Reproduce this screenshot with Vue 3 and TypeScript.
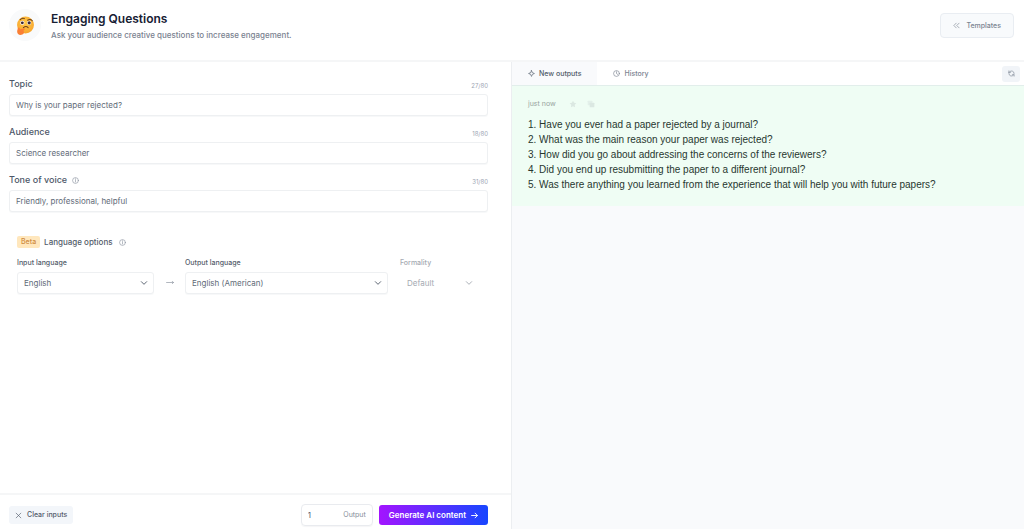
<script setup lang="ts">
import { reactive, ref } from 'vue'

interface Field {
  id: string
  label: string
  value: string
  count: string
  info: boolean
}

const fields = reactive<Field[]>([
  { id: 'topic', label: 'Topic', value: 'Why is your paper rejected?', count: '27/80', info: false },
  { id: 'audience', label: 'Audience', value: 'Science researcher', count: '18/80', info: false },
  { id: 'tone', label: 'Tone of voice', value: 'Friendly, professional, helpful', count: '31/80', info: true },
])

const outputs: string[] = [
  '1. Have you ever had a paper rejected by a journal?',
  '2. What was the main reason your paper was rejected?',
  '3. How did you go about addressing the concerns of the reviewers?',
  '4. Did you end up resubmitting the paper to a different journal?',
  '5. Was there anything you learned from the experience that will help you with future papers?',
]

const outputCount = ref('1')
const inputLanguage = ref('English')
const outputLanguage = ref('English (American)')
const formality = ref('Default')

function clearInputs(): void {
  for (const field of fields) {
    field.value = ''
    field.count = '0/80'
  }
}

function updateCount(field: Field): void {
  field.count = `${field.value.length}/80`
}
</script>

<template>
  <div class="page">
    <header class="header">
      <span class="avatar">
        <svg viewBox="0 0 36 36" width="19" height="19" aria-hidden="true">
          <defs>
            <radialGradient id="face" cx="50%" cy="38%" r="65%">
              <stop offset="0" stop-color="#ffc94a" />
              <stop offset="1" stop-color="#f7a32b" />
            </radialGradient>
          </defs>
          <circle cx="18" cy="17" r="16" fill="url(#face)" />
          <path d="M8 7q4-4 8-2M22 8q5-3 9 1" fill="none" stroke="#6b421d" stroke-width="2" stroke-linecap="round" />
          <circle cx="12" cy="13" r="4" fill="#fff" />
          <circle cx="25" cy="13" r="4" fill="#fff" />
          <circle cx="12" cy="13" r="2.8" fill="#3c2838" />
          <circle cx="25" cy="13" r="3" fill="#3c2838" />
          <path d="M14 22q5-4 9 0" fill="none" stroke="#704015" stroke-width="2" stroke-linecap="round" />
          <path d="M3 25q0-4 3-3l2 3 7-2q3 0 1 3l-2 2q3 5-2 7-5 2-8-1-3-3-1-9z" fill="#fa7f34" />
        </svg>
      </span>
      <div class="heading">
        <h1>Engaging Questions</h1>
        <p>Ask your audience creative questions to increase engagement.</p>
      </div>
      <button type="button" class="templates">
        <svg viewBox="0 0 12 12" width="7" height="7" class="line" aria-hidden="true"><path d="M5.500 2l-4 4 4 4M10.500 2l-4 4 4 4" /></svg>
        Templates
      </button>
    </header>

    <main class="columns">
      <section class="editor">
        <form class="form" @submit.prevent>
          <div v-for="field in fields" :key="field.id" class="field">
            <div class="field-head">
              <label :for="field.id">{{ field.label }}</label>
              <svg v-if="field.info" viewBox="0 0 12 12" width="7" height="7" class="line info" aria-hidden="true"><circle cx="6" cy="6" r="5" /><path d="M6 5.500v3M6 3v1" /></svg>
              <span class="count">{{ field.count }}</span>
            </div>
            <input :id="field.id" v-model="field.value" class="control" type="text" maxlength="80" @input="updateCount(field)" />
          </div>

          <fieldset class="language">
            <legend>
              <span class="beta">Beta</span>
              <span>Language options</span>
              <svg viewBox="0 0 12 12" width="7" height="7" class="line info" aria-hidden="true"><circle cx="6" cy="6" r="5" /><path d="M6 5.500v3M6 3v1" /></svg>
            </legend>
            <div class="language-row">
              <div class="pick pick-input">
                <label for="input-language">Input language</label>
                <div class="select-box">
                  <select id="input-language" v-model="inputLanguage" class="control"><option>English</option></select>
                  <svg viewBox="0 0 12 12" width="8" height="8" class="line chevron" aria-hidden="true"><path d="M2 4l4 4 4-4" /></svg>
                </div>
              </div>
              <svg viewBox="0 0 14 12" width="8" height="7" class="line arrow" aria-hidden="true"><path d="M1 6h12M11 4l2 2-2 2" /></svg>
              <div class="pick pick-output">
                <label for="output-language">Output language</label>
                <div class="select-box">
                  <select id="output-language" v-model="outputLanguage" class="control"><option>English (American)</option></select>
                  <svg viewBox="0 0 12 12" width="8" height="8" class="line chevron" aria-hidden="true"><path d="M2 4l4 4 4-4" /></svg>
                </div>
              </div>
              <div class="pick pick-formality">
                <label for="formality">Formality</label>
                <div class="select-box">
                  <select id="formality" v-model="formality" class="control" disabled><option>Default</option></select>
                  <svg viewBox="0 0 12 12" width="8" height="8" class="line chevron" aria-hidden="true"><path d="M2 4l4 4 4-4" /></svg>
                </div>
              </div>
            </div>
          </fieldset>
        </form>

        <footer class="actions">
          <button type="button" class="clear" @click="clearInputs">
            <svg viewBox="0 0 12 12" width="7" height="7" class="line" aria-hidden="true"><path d="M2 2l8 8M10 2l-8 8" /></svg>
            Clear inputs
          </button>
          <div class="quantity">
            <input id="quantity" v-model="outputCount" type="text" inputmode="numeric" />
            <label for="quantity">Output</label>
          </div>
          <button type="button" class="generate">
            Generate AI content
            <svg viewBox="0 0 12 12" width="7" height="7" class="line" aria-hidden="true"><path d="M1 6h10M7 2l4 4-4 4" /></svg>
          </button>
        </footer>
      </section>

      <section class="results">
        <nav class="tabs">
          <button type="button" class="tab active">
            <svg viewBox="0 0 12 12" width="7" height="7" class="line" aria-hidden="true"><path d="M6 1l1.500 3.500L11 6 7.500 7.500 6 11 4.500 7.500 1 6l3.500-1.500z" /></svg>
            New outputs
          </button>
          <button type="button" class="tab">
            <svg viewBox="0 0 12 12" width="7" height="7" class="line" aria-hidden="true"><circle cx="6" cy="6" r="5" /><path d="M6 3v3l2 1.500" /></svg>
            History
          </button>
          <button type="button" class="refresh" aria-label="Refresh">
            <svg viewBox="0 0 12 12" width="7" height="7" class="line" aria-hidden="true"><path d="M1.500 4.500V1.500M1.500 4h3M2 4a4.500 4.500 0 0 1 8.500 2M10.500 10.500V8h-3M10 8a4.500 4.500 0 0 1-8.500-2" /></svg>
          </button>
        </nav>
        <article class="output">
          <div class="meta">
            <time>just now</time>
            <button type="button" aria-label="Save"><svg viewBox="0 0 12 12" width="8" height="8" aria-hidden="true"><path d="M6 1l1.600 3.200 3.400.6-2.400 2.400.5 3.500L6 9.200l-3.100 1.500.5-3.500L1 4.800l3.400-.6z" fill="currentColor" /></svg></button>
            <button type="button" aria-label="Copy"><svg viewBox="0 0 12 12" width="8" height="8" aria-hidden="true"><rect x="1" y="1" width="7" height="7" rx="1" fill="currentColor" opacity=".6" /><rect x="4" y="4" width="7" height="7" rx="1" fill="currentColor" /></svg></button>
          </div>
          <p v-for="line in outputs" :key="line">{{ line }}</p>
        </article>
      </section>
    </main>
  </div>
</template>

<style>
body {
  margin: 0;
}
</style>

<style scoped>
.page,
.page * {
  box-sizing: border-box;
}

.page {
  display: flex;
  flex-direction: column;
  min-height: 100vh;
  background: #fff;
  color: #535c6a;
  font-family: Inter, "Liberation Sans", sans-serif;
  font-size: 8px;
  line-height: 12px;
}

button,
input,
select {
  margin: 0;
  font: inherit;
  color: inherit;
}

button {
  display: flex;
  align-items: center;
  border: 0;
  padding: 0;
  background: none;
  white-space: nowrap;
  cursor: pointer;
}

svg {
  flex: none;
}

.line {
  fill: none;
  stroke: currentColor;
  stroke-width: 1.1;
  stroke-linecap: round;
  stroke-linejoin: round;
}

.header {
  display: flex;
  align-items: flex-start;
  padding: 9px 10px 12px 9px;
  min-height: 62px;
  border-bottom: 2px solid #f5f6f7;
}

.avatar {
  display: grid;
  place-items: center;
  width: 32px;
  height: 32px;
  border-radius: 50%;
  background: #f9fafb;
}

.heading {
  flex: 1;
  margin-left: 10px;
}

h1 {
  margin: 2px 0 0;
  color: #172033;
  font-size: 12px;
  font-weight: 600;
  line-height: 16px;
}

.heading p {
  margin: 2px 0 0;
  color: #7a8290;
  font-weight: 500;
}

.templates {
  gap: 6px;
  height: 25px;
  margin-top: 4px;
  padding: 0 12px;
  border: 1px solid #e9edf2;
  border-radius: 4px;
  background: #f8fafc;
  color: #7b8491;
  font-size: 7px;
  font-weight: 500;
}

.columns {
  display: grid;
  flex: 1;
  grid-template-columns: 1fr 1fr;
}

.editor {
  display: flex;
  flex-direction: column;
  border-right: 1px solid #eceef1;
}

.form {
  display: flex;
  flex: 1;
  flex-direction: column;
  gap: 10px;
  padding: 16px 23px 16px 9px;
}

.field {
  display: flex;
  flex-direction: column;
  gap: 4px;
}

.field-head {
  display: flex;
  align-items: center;
  gap: 5px;
  color: #4d5768;
  font-size: 9px;
  font-weight: 500;
}

.info {
  color: #8d95a1;
}

.count {
  align-self: flex-end;
  margin-left: auto;
  color: #9ca5b3;
  font-size: 6px;
  font-weight: 400;
  line-height: 8px;
}

.control {
  display: block;
  width: 100%;
  height: 22px;
  padding: 0 6px;
  border: 1px solid #eef0f2;
  border-radius: 3px;
  outline: 0;
  background: #fff;
  color: #626b78;
  box-shadow: 0 1px 1px #f7f8f9;
  appearance: none;
}

.language {
  min-width: 0;
  margin: 14px 0 0;
  padding: 0 8px;
  border: 0;
}

legend {
  display: flex;
  align-items: center;
  gap: 4px;
  padding: 0;
  font-weight: 500;
}

legend .info {
  margin-left: 2px;
}

.beta {
  padding: 0 4px;
  border-radius: 2px;
  background: #ffe7bd;
  color: #cf8b3d;
  font-size: 7px;
}

.language-row {
  display: grid;
  grid-template-columns: 137fr 31px 203fr 92fr;
  align-items: end;
  margin-top: 9px;
}

.pick label {
  display: block;
  margin-bottom: 3px;
  font-size: 7px;
  font-weight: 500;
}

.select-box {
  display: grid;
  align-items: center;
}

.select-box > * {
  grid-area: 1 / 1;
}

.chevron {
  justify-self: end;
  margin-right: 6px;
  stroke-width: 1.4;
  pointer-events: none;
}

.arrow {
  justify-self: center;
  margin-bottom: 8px;
  color: #848c98;
}

.pick-formality {
  padding-left: 12px;
  color: #a5aab2;
}

.pick-formality .chevron {
  margin-right: 7px;
}

.pick-formality .control {
  border-color: transparent;
  background: transparent;
  box-shadow: none;
  color: #a5aab2;
  opacity: 1;
}

.actions {
  display: flex;
  align-items: center;
  gap: 6px;
  padding: 9px 23px 3px 9px;
  border-top: 2px solid #f5f6f7;
}

.clear {
  gap: 5px;
  height: 18px;
  margin-right: auto;
  padding: 0 6px;
  border-radius: 3px;
  background: #f3f6fa;
  font-size: 7px;
  font-weight: 500;
}

.quantity {
  display: flex;
  align-items: center;
  width: 72px;
  height: 22px;
  padding: 0 6px;
  border: 1px solid #e9ebef;
  border-radius: 4px;
  box-shadow: 0 1px 1px #f5f6f7;
}

.quantity input {
  flex: 1;
  min-width: 0;
  padding: 0;
  border: 0;
  outline: 0;
  background: none;
}

.quantity label {
  color: #858d99;
  font-size: 7px;
}

.generate {
  gap: 5px;
  height: 20px;
  padding: 0 10px;
  border-radius: 3px;
  background: linear-gradient(90deg, #a314ff, #1746ff);
  color: #fff;
  font-weight: 600;
}

.generate .line {
  stroke-width: 1.6;
}

.results {
  background: #f9fafc;
}

.tabs {
  display: flex;
  align-items: center;
  height: 24px;
  padding-right: 4px;
  border-bottom: 1px solid #e2eeeb;
  background: #fff;
}

.tab {
  align-self: stretch;
  gap: 4px;
  padding: 0 16px;
  color: #7b8491;
  font-size: 7px;
  font-weight: 500;
}

.tab.active {
  background: #f9fafc;
  color: #505a69;
}

.refresh {
  justify-content: center;
  width: 18px;
  height: 16px;
  margin-left: auto;
  border-radius: 3px;
  background: #f1f4f8;
  color: #808997;
}

.output {
  padding: 12px 16px 14px;
  background: #effdf4;
  color: #27372f;
  font-size: 10px;
  line-height: 15px;
}

.meta {
  display: flex;
  align-items: center;
  gap: 10px;
  margin-bottom: 7px;
  color: #98a49f;
  font-size: 7px;
  line-height: 12px;
}

.meta time {
  margin-right: 3px;
}

.meta button {
  color: #dbe8e2;
}

.output p {
  margin: 0;
  font-family: "Liberation Sans", Inter, sans-serif;
}
</style>
